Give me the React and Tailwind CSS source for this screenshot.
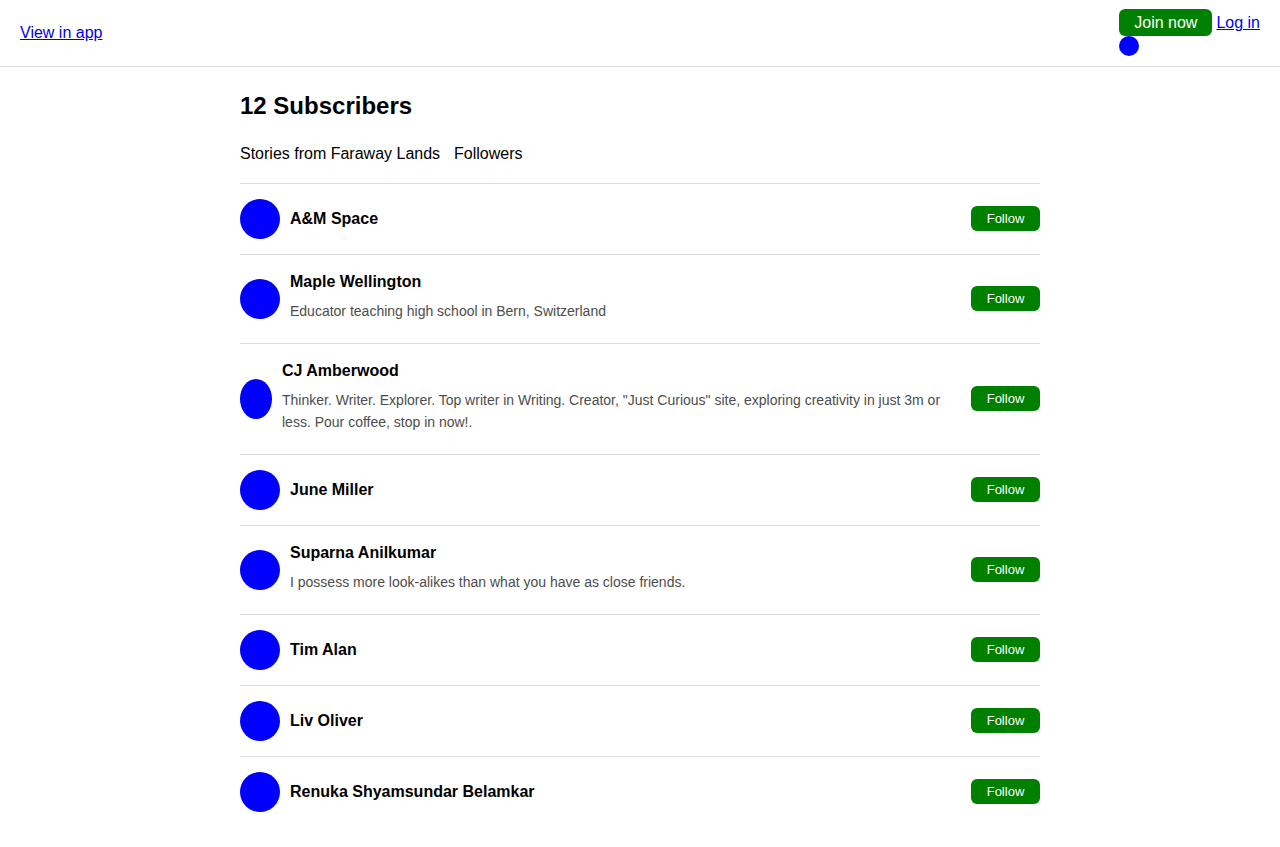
import React from "react";

const people = [
  { name: "A&M Space" },
  { name: "Maple Wellington", bio: "Educator teaching high school in Bern, Switzerland" },
  {
    name: "CJ Amberwood",
    bio: 'Thinker. Writer. Explorer. Top writer in Writing. Creator, "Just Curious" site, exploring creativity in just 3m or less. Pour coffee, stop in now!.',
    squish: true,
  },
  { name: "June Miller" },
  { name: "Suparna Anilkumar", bio: "I possess more look-alikes than what you have as close friends." },
  { name: "Tim Alan" },
  { name: "Liv Oliver" },
  { name: "Renuka Shyamsundar Belamkar" },
];

function Row({ p }) {
  return (
    <li className="flex items-center border-t border-[#dddddd] py-[15px]">
      <div className="flex flex-1 min-w-0 items-center gap-[10px]">
        <div
          className={
            (p.squish ? "w-[32px]" : "w-[40px]") +
            " h-[40px] shrink-0 rounded-[50%] bg-[#0000ff]"
          }
        />
        <div className="min-w-0 flex-1">
          <div className="text-[16px] font-bold leading-[24px] text-black">{p.name}</div>
          {p.bio && (
            <p className="my-[6px] text-[14px] leading-[22px] text-[#4d4d4d]">{p.bio}</p>
          )}
        </div>
      </div>
      <button className="ml-[20px] -mt-[1px] h-[25px] w-[69px] shrink-0 rounded-[6px] bg-[#008000] text-center text-[13px] leading-[25px] text-white">
        Follow
      </button>
    </li>
  );
}

export default function App() {
  return (
    <div className="min-h-[847px] bg-white text-black" style={{ fontFamily: '"Liberation Sans", Arial, sans-serif' }}>
      <header className="flex h-[67px] items-center justify-between border-b border-[#dddddd] px-[20px]">
        <a href="#" className="text-[16px] leading-[18px] text-[#0000ee] underline">
          View in app
        </a>
        <div className="-mt-[1px] flex flex-col items-start">
          <div className="flex items-baseline">
            <button className="h-[27px] rounded-[6px] bg-[#008000] px-[15px] text-[16px] leading-[27px] text-white">
              Join now
            </button>
            <a href="#" className="ml-[4px] text-[16px] leading-[18px] text-[#0000ee] underline">
              Log in
            </a>
          </div>
          <div className="h-[20px] w-[20px] rounded-full bg-[#0000ff]" />
        </div>
      </header>
      <main className="mx-auto w-[800px] pt-[25px]">
        <h1 className="text-[24px] font-bold leading-[28px]">12 Subscribers</h1>
        <nav className="mt-[22px] mb-[17px] flex gap-[14px] text-[16px] leading-[24px]">
          <span>Stories from Faraway Lands</span>
          <span>Followers</span>
        </nav>
        <ul>
          {people.map((p) => (
            <Row key={p.name} p={p} />
          ))}
        </ul>
      </main>
    </div>
  );
}
